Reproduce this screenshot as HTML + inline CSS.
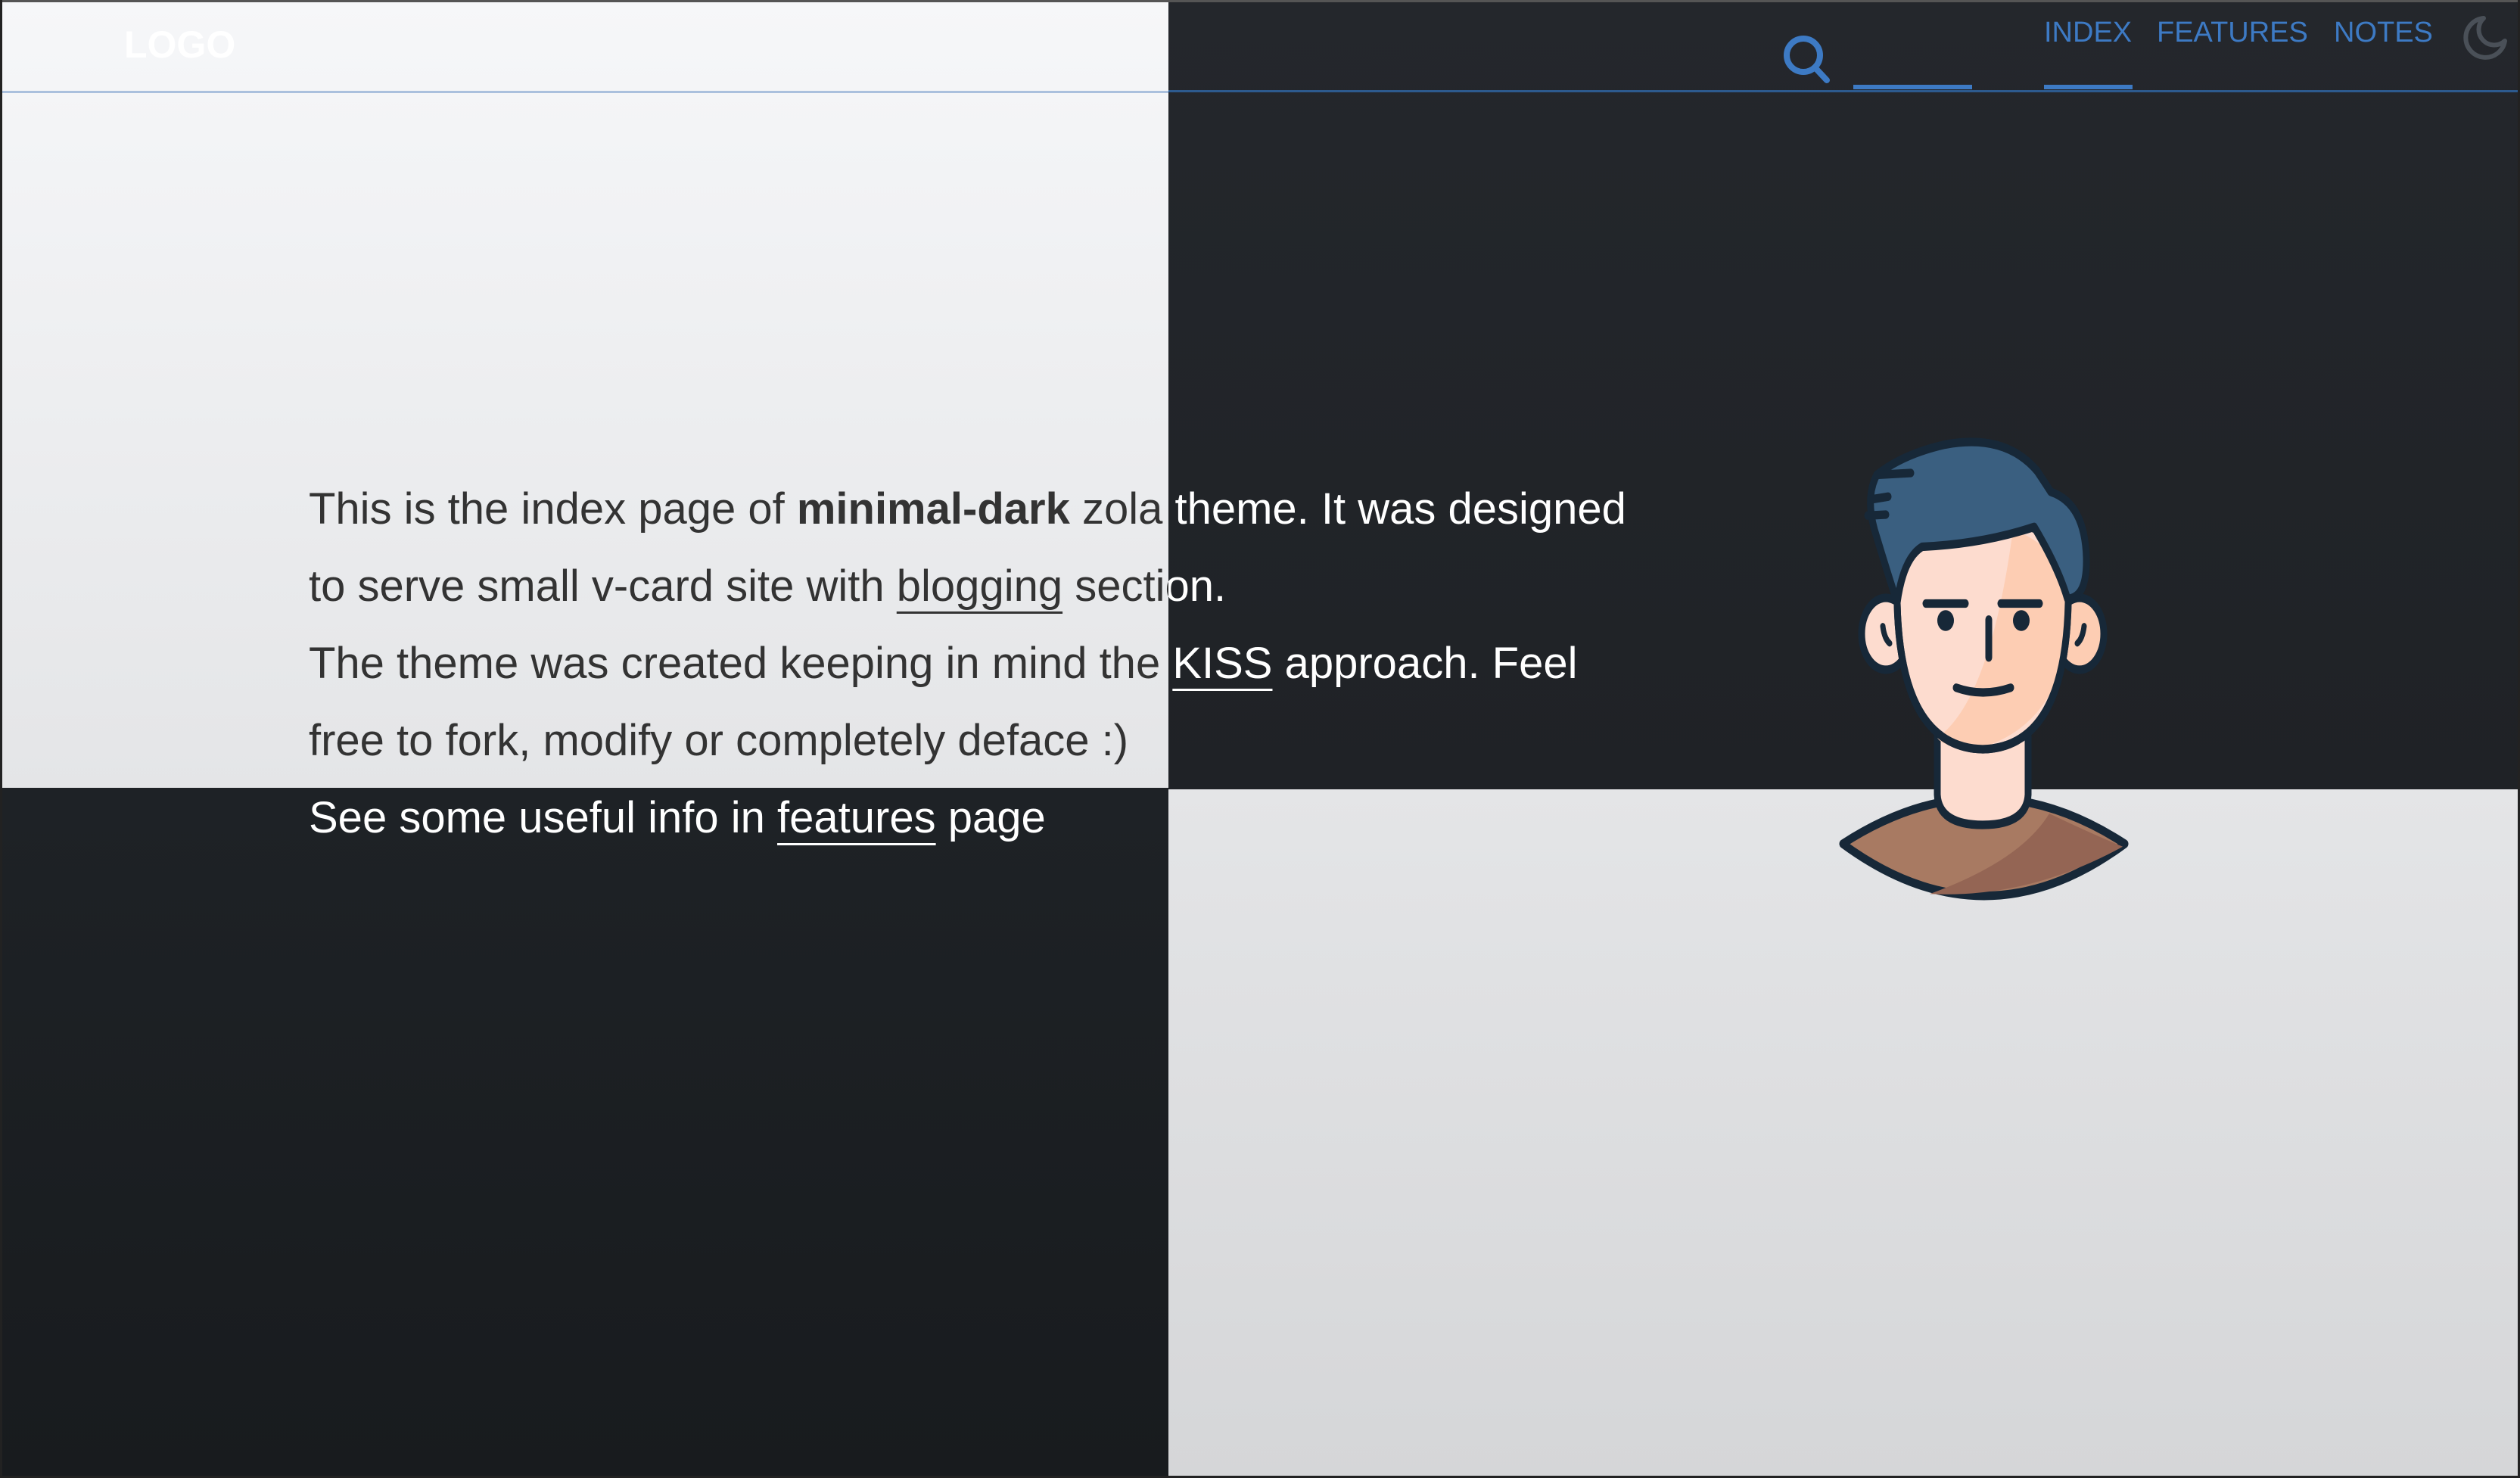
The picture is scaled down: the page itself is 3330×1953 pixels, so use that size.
<!DOCTYPE html>
<html><head><meta charset="utf-8"><style>
html,body{margin:0;padding:0;width:3330px;height:1953px;overflow:hidden;font-family:"Liberation Sans",Arial,sans-serif}
.q{position:absolute}
.txt{position:absolute;left:0;top:0;width:3330px;height:1953px}
.txt p{position:absolute;left:408px;top:622px;margin:0;font-size:58px;line-height:102px;white-space:nowrap}
.txt a{color:inherit;text-decoration:underline;text-decoration-thickness:3px;text-underline-offset:14px}
.nav{position:absolute;top:22px;font-size:38px;color:#3d7ac4}
</style></head><body>
<div class="q" style="left:0;top:0;width:1544px;height:1041px;background:linear-gradient(#f6f7f9,#e4e5e7)"></div>
<div class="q" style="left:1544px;top:0;width:1786px;height:1043px;background:linear-gradient(#24272c,#1f2226)"></div>
<div class="q" style="left:0;top:1041px;width:1544px;height:912px;background:linear-gradient(#1e2226,#181b1e)"></div>
<div class="q" style="left:1544px;top:1043px;width:1786px;height:910px;background:linear-gradient(#e4e5e7,#d5d6d8)"></div>
<div class="q" style="left:0;top:120px;width:1544px;height:3px;background:#aac0dd"></div>
<div class="q" style="left:1544px;top:119px;width:1786px;height:3px;background:#2d5a8e"></div>
<div class="q" style="left:0;top:0;width:3330px;height:3px;background:#555"></div>
<div class="q" style="left:0;top:0;width:3px;height:1953px;background:#222"></div>
<div class="q" style="left:3327px;top:0;width:3px;height:1953px;background:#222"></div>
<div class="q" style="left:0;top:1950px;width:3330px;height:3px;background:#222"></div>
<div class="q" style="left:164px;top:30px;font-size:50px;font-weight:bold;color:#fff">LOGO</div>

<svg class="q" style="left:2350px;top:40px" width="80" height="80" viewBox="0 0 80 80"><circle cx="33" cy="33" r="22" fill="none" stroke="#3d7ac4" stroke-width="8"/><line x1="49" y1="50" x2="64" y2="66" stroke="#3d7ac4" stroke-width="8" stroke-linecap="round"/></svg>
<div class="q" style="left:2449px;top:112px;width:157px;height:6px;background:#3d7ac4"></div>
<div class="nav" style="left:2701px">INDEX</div>
<div class="nav" style="left:2850px">FEATURES</div>
<div class="nav" style="left:3084px">NOTES</div>
<div class="q" style="left:2701px;top:112px;width:117px;height:6px;background:#3d7ac4"></div>
<svg class="q" style="left:3252px;top:18px" width="64" height="64" viewBox="0 0 64 64"><path d="M30 6 A26 26 0 1 0 58 36 A18 18 0 0 1 30 6 Z" fill="none" stroke="#4a5058" stroke-width="6" stroke-linejoin="round"/></svg>

<div class="txt" style="color:#333;clip-path:path('M0 0H1544V1041H0Z M1544 1043H3330V1953H1544Z')"><p>This is the index page of <b>minimal-dark</b> zola theme. It was designed<br>to serve small v-card site with <a>blogging</a> section.<br>The theme was created keeping in mind the <a>KISS</a> approach. Feel<br>free to fork, modify or completely deface :)<br>See some useful info in <a>features</a> page</p></div>
<div class="txt" style="color:#fff;clip-path:path('M1544 0H3330V1043H1544Z M0 1041H1544V1953H0Z')"><p>This is the index page of <b>minimal-dark</b> zola theme. It was designed<br>to serve small v-card site with <a>blogging</a> section.<br>The theme was created keeping in mind the <a>KISS</a> approach. Feel<br>free to fork, modify or completely deface :)<br>See some useful info in <a>features</a> page</p></div>

<svg class="q" style="left:2380px;top:550px" width="440" height="640" viewBox="0 0 440 512" preserveAspectRatio="none">
<g stroke="#172838" stroke-width="9" stroke-linejoin="round" stroke-linecap="round">
<path d="M55 452 Q242 355 428 452 Q242 562 55 452 Z" fill="#a87a62"/>
<path d="M328 420 Q380 440 425 455 Q300 510 170 505 Q290 470 328 420 Z" fill="#946554" stroke="none"/>
<path d="M180 330 V400 Q182 432 240 432 Q298 432 300 400 V330 Z" fill="#fddccf"/>
<ellipse cx="112" cy="230" rx="32" ry="38" fill="#fddccf"/>
<ellipse cx="368" cy="230" rx="32" ry="38" fill="#fdcdb3"/>
<path d="M127 170 Q122 350 240 352 Q358 350 353 170 Q350 110 240 110 Q130 110 127 170 Z" fill="#fddccf"/>
<path d="M280 120 Q350 140 353 200 Q355 320 240 350 Q190 352 180 340 Q250 300 280 120 Z" fill="#fdcdb3" stroke="none"/>
<path d="M127 170 Q122 350 240 352 Q358 350 353 170 Q350 110 240 110 Q130 110 127 170 Z" fill="none"/>
<path d="M127 197 Q112 160 97 120 Q85 85 100 62 Q135 40 190 30 Q270 18 312 58 Q322 70 330 80 Q375 92 377 150 Q378 192 352 193 Q340 160 308 117 Q240 135 160 138 Q135 150 127 197 Z" fill="#3a5f80"/>
<path d="M100 62 L145 60 M92 88 L115 85 M88 105 L112 104" fill="none"/>
<line x1="165" y1="198" x2="217" y2="198"/><line x1="264" y1="198" x2="315" y2="198"/>
<line x1="248" y1="215" x2="248" y2="255"/>
<path d="M205 287 Q240 297 277 287" fill="none"/>
<path d="M108 222 Q110 235 117 240 M374 222 Q372 235 365 240" fill="none" stroke-width="7"/>
</g>
<circle cx="191" cy="216" r="11" fill="#172838"/><circle cx="291" cy="216" r="11" fill="#172838"/>
</svg>
</body></html>
